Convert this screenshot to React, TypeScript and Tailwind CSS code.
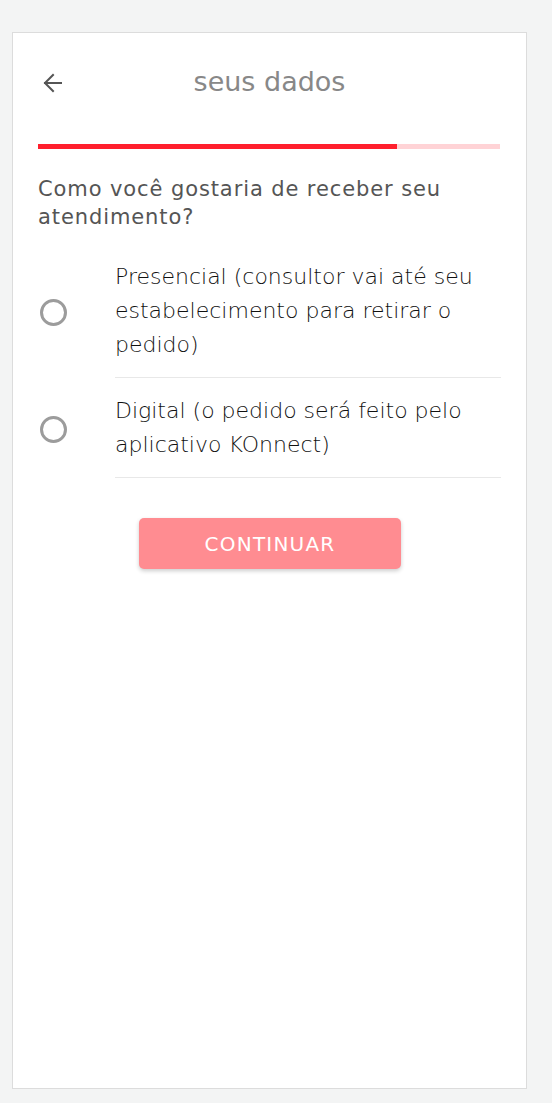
import React, { useState } from 'react';

const options = [
  { id: 'presencial', label: 'Presencial (consultor vai até seu estabelecimento para retirar o pedido)' },
  { id: 'digital', label: 'Digital (o pedido será feito pelo aplicativo KOnnect)' },
];

export default function App() {
  const [selected, setSelected] = useState<string | null>(null);

  return (
    <div
      className="min-h-[1103px] bg-[#f3f4f4] pt-[32px] pl-[12px] pr-[25px] pb-[14px]"
      style={{ fontFamily: '"DejaVu Sans", sans-serif' }}
    >
      <div className="h-[1057px] w-[515px] border border-[#dcdcdc] bg-white px-[25px]">
        {/* Header */}
        <div className="relative flex h-[98px] items-center justify-center">
          <button className="absolute left-[5px] top-[40px] text-[#555]" aria-label="Voltar">
            <svg width="20" height="20" viewBox="0 0 20 20" fill="none" stroke="currentColor" strokeWidth="2" strokeLinecap="square">
              <path d="M2 10h16" />
              <path d="M10 2l-8 8 8 8" />
            </svg>
          </button>
          <h1 className="mt-[1px] text-[27px] text-[#888]">seus dados</h1>
        </div>

        {/* Progress */}
        <div className="mt-[13px] flex h-[5px] w-[462px]">
          <div className="h-full w-[359px] bg-[#ff1f2d]" />
          <div className="h-full flex-1 bg-[#ffd3d6]" />
        </div>

        <p className="mt-[26px] pr-[30px] text-[21px] leading-[28px] tracking-[0.9px] text-[#555]">
          Como você gostaria de receber seu atendimento?
        </p>

        {/* Options */}
        <div className="mt-[13px]">
          {options.map((o) => (
            <label key={o.id} className="flex cursor-pointer items-center">
              <span className="flex w-[77px] shrink-0 items-center pl-[2px]">
                <input
                  type="radio"
                  name="atendimento"
                  className="sr-only"
                  checked={selected === o.id}
                  onChange={() => setSelected(o.id)}
                />
                <span className="mt-[2px] flex h-[27px] w-[27px] items-center justify-center rounded-full border-[3px] border-[#9c9c9c]">
                  {selected === o.id && <span className="h-[13px] w-[13px] rounded-full bg-[#ff1f2d]" />}
                </span>
              </span>
              <span className="flex-1 border-b border-[#e8e8e8] pt-[16px] pb-[15px] text-[22px] leading-[34px] font-extralight text-[#111]">
                {o.label}
              </span>
            </label>
          ))}
        </div>

        <div className="mt-[40px] flex justify-center">
          <button className="h-[51px] w-[262px] rounded-[5px] bg-[#ff8c91] pl-[1px] text-[20px] font-normal tracking-[1.2px] text-white shadow-[0_2px_4px_rgba(0,0,0,0.2)]">
            CONTINUAR
          </button>
        </div>
      </div>
    </div>
  );
}
